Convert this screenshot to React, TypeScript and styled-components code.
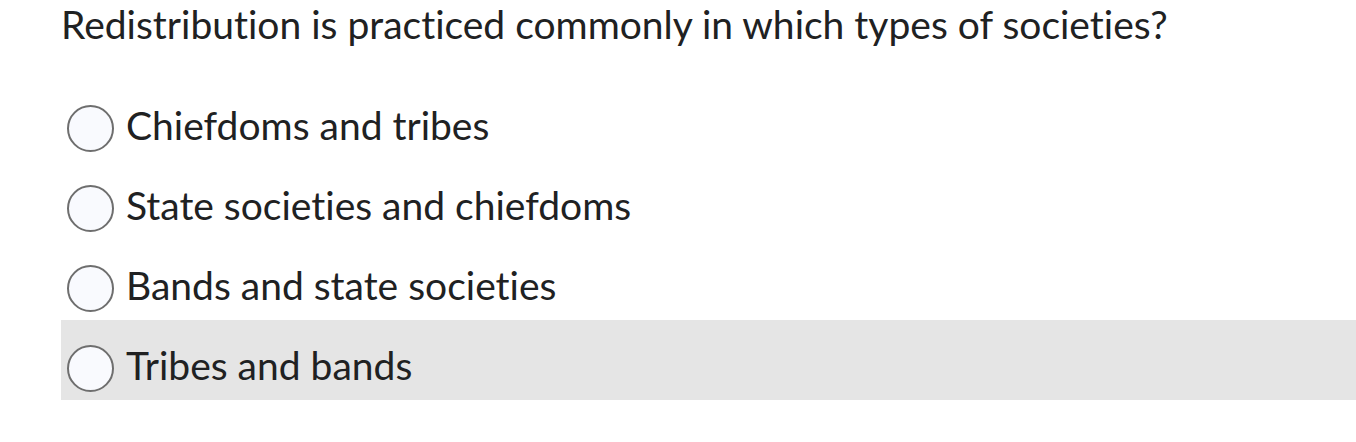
import React from "react";
import styled, { createGlobalStyle } from "styled-components";

const Global = createGlobalStyle`
  html, body { margin: 0; padding: 0; background: #ffffff; }
  body {
    font-family: Lato, "Open Sans", sans-serif;
    color: #202122;
    font-variant-ligatures: no-common-ligatures;
    font-feature-settings: "liga" 0, "clig" 0;
  }
`;

const Page = styled.div`
  padding: 0 0 0 61px;
  width: 1356px;
  box-sizing: border-box;
`;

const Question = styled.div`
  font-size: 39px;
  line-height: 48px;
  height: 80px;
  box-sizing: border-box;
`;

const List = styled.div`
  display: flex;
  flex-direction: column;
`;

const Row = styled.label<{ $hover?: boolean }>`
  display: flex;
  align-items: flex-start;
  height: 80px;
  box-sizing: border-box;
  padding: 21px 0 0 6px;
  background: ${(p) => (p.$hover ? "#e5e5e5" : "transparent")};
`;

const Radio = styled.span`
  width: 47px;
  height: 47px;
  box-sizing: border-box;
  border: 2.5px solid #6e6e6e;
  border-radius: 50%;
  background: #f9fafe;
  margin-top: 4px;
  flex-shrink: 0;
`;

const Label = styled.span`
  font-size: 39px;
  line-height: 48px;
  margin-left: 12px;
`;

const options = [
  "Chiefdoms and tribes",
  "State societies and chiefdoms",
  "Bands and state societies",
  "Tribes and bands",
];

export default function App() {
  return (
    <>
      <Global />
      <Page>
        <Question>Redistribution is practiced commonly in which types of societies?</Question>
        <List>
          {options.map((o, i) => (
            <Row key={o} $hover={i === 3}>
              <Radio />
              <Label>{o}</Label>
            </Row>
          ))}
        </List>
      </Page>
    </>
  );
}
